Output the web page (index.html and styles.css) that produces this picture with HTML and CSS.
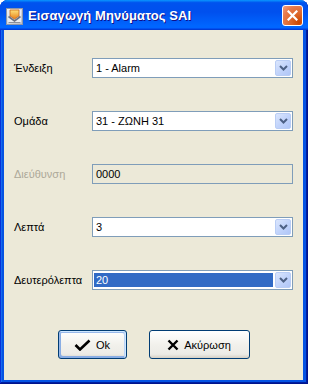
FILE: index.html
```html
<!DOCTYPE html>
<html lang="el">
<head>
<meta charset="utf-8">
<title>Εισαγωγή Μηνύματος SAI</title>
<link rel="stylesheet" href="styles.css">
</head>
<body>
<div class="window">
  <div class="titlebar">
    <svg class="app-icon" width="17" height="17" viewBox="0 0 17 17">
      <defs>
        <linearGradient id="ig" x1="0" y1="0" x2="0" y2="1">
          <stop offset="0" stop-color="#ffe27a"/>
          <stop offset="1" stop-color="#e8801a"/>
        </linearGradient>
        <linearGradient id="fr" x1="0" y1="0" x2="1" y2="1">
          <stop offset="0" stop-color="#f4f4f4"/>
          <stop offset="1" stop-color="#b9bcc4"/>
        </linearGradient>
      </defs>
      <rect x="0.5" y="0.5" width="16" height="16" fill="url(#fr)" stroke="#8e96a8"/>
      <rect x="2" y="2" width="13" height="13" fill="#e9ecf2"/>
      <path d="M4 2 H13 V8 L8.5 11 L4 8 Z" fill="url(#ig)" stroke="#c8661a" stroke-width="0.8"/>
      <path d="M2.5 8.5 L8.5 13 L14.5 8.5" fill="none" stroke="#6d7280" stroke-width="1.6"/>
      <path d="M2.5 14.5 H14.5" stroke="#8a8f9c" stroke-width="1"/>
    </svg>
    <span class="title">Εισαγωγή Μηνύματος SAI</span>
    <div class="close-btn">
      <svg width="11" height="11" viewBox="0 0 11 11">
        <path d="M1.5 1.5 L9.5 9.5 M9.5 1.5 L1.5 9.5" stroke="#ffffff" stroke-width="2.2" stroke-linecap="square"/>
      </svg>
    </div>
  </div>
  <div class="client">
    <div class="form">
      <label class="lbl">Ένδειξη</label>
      <div class="combo"><span class="value">1 - Alarm</span><span class="drop"><svg width="9" height="6" viewBox="0 0 9 6"><path d="M1 1 L4.5 4.5 L8 1" fill="none" stroke="#4d6185" stroke-width="2"/></svg></span></div>

      <label class="lbl">Ομάδα</label>
      <div class="combo"><span class="value">31 - ΖΩΝΗ 31</span><span class="drop"><svg width="9" height="6" viewBox="0 0 9 6"><path d="M1 1 L4.5 4.5 L8 1" fill="none" stroke="#4d6185" stroke-width="2"/></svg></span></div>

      <label class="lbl disabled">Διεύθυνση</label>
      <div class="textbox"><span class="value">0000</span></div>

      <label class="lbl">Λεπτά</label>
      <div class="combo"><span class="value">3</span><span class="drop"><svg width="9" height="6" viewBox="0 0 9 6"><path d="M1 1 L4.5 4.5 L8 1" fill="none" stroke="#4d6185" stroke-width="2"/></svg></span></div>

      <label class="lbl">Δευτερόλεπτα</label>
      <div class="combo"><span class="value selected">20</span><span class="drop"><svg width="9" height="6" viewBox="0 0 9 6"><path d="M1 1 L4.5 4.5 L8 1" fill="none" stroke="#4d6185" stroke-width="2"/></svg></span></div>
    </div>
    <div class="buttons">
      <div class="btn default">
        <svg width="17" height="12" viewBox="0 0 17 12"><path d="M1.5 6 L6 10.5 L15.5 1.5" fill="none" stroke="#000" stroke-width="2.6"/></svg>
        <span>Ok</span>
      </div>
      <div class="btn cancel">
        <svg width="12" height="12" viewBox="0 0 12 12"><path d="M1.5 1.5 L10.5 10.5 M10.5 1.5 L1.5 10.5" stroke="#000" stroke-width="2.4"/></svg>
        <span>Ακύρωση</span>
      </div>
    </div>
  </div>
</div>
</body>
</html>
```

FILE: styles.css
```css
html, body {
  margin: 0;
  padding: 0;
  background: #ffffff;
}

.window {
  width: 308px;
  height: 384px;
  display: flex;
  flex-direction: column;
  background: #0553e3;
  border-radius: 8px 8px 0 0;
  box-shadow: inset -1px -1px #00138c, inset 1px 0 #0831d9, inset -2px -2px #001ea0, inset 2px 0 #166aee;
  font-family: "Liberation Sans", Arial, sans-serif;
  font-size: 11px;
  color: #000;
  box-sizing: border-box;
}

.titlebar {
  height: 30px;
  display: flex;
  align-items: center;
  padding: 0 5px 0 6px;
  border-radius: 8px 8px 0 0;
  background: linear-gradient(180deg, #0997ff, #0053ee 9%, #0050ee 40%, #0066ff 86%, #0066ff 92%, #005bff 94%, #003dd7 97%, #003dd7);
  box-sizing: border-box;
}

.app-icon {
  flex: none;
  margin-top: 3px;
}

.title {
  margin-left: 5px;
  flex: 1;
  color: #ffffff;
  font-family: "Liberation Sans", Arial, sans-serif;
  font-weight: bold;
  font-size: 13px;
  text-shadow: 1px 1px #0f1089;
  letter-spacing: 0.1px;
  padding-top: 1px;
}

.close-btn {
  width: 21px;
  height: 21px;
  box-sizing: border-box;
  border: 1px solid #ffffff;
  border-radius: 3px;
  display: flex;
  align-items: center;
  justify-content: center;
  background: radial-gradient(circle at 85% 85%, #cc4600 0%, #dc6527 35%, #e67a4c 70%, #f0a081 100%);
  margin-top: 1px;
}

.client {
  flex: 1;
  margin: 0 5px 4px 4px;
  background: #ece9d8;
  padding: 28px 10px 0 10px;
  display: flex;
  flex-direction: column;
}

.form {
  display: grid;
  grid-template-columns: 78px 201px;
  grid-auto-rows: 20px;
  row-gap: 33px;
  align-items: center;
}

.lbl {
  white-space: nowrap;
}

.lbl.disabled {
  color: #aca899;
}

.combo, .textbox {
  height: 20px;
  box-sizing: border-box;
  border: 1px solid #7f9db9;
  background: #ffffff;
  display: flex;
  align-items: center;
  padding: 1px;
}

.textbox {
  background: #ece9d8;
}

.value {
  flex: 1;
  padding-left: 2px;
  margin-right: 2px;
  height: 14px;
  line-height: 14px;
}

.value.selected {
  background: #316ac5;
  color: #ffffff;
}

.drop {
  width: 16px;
  height: 16px;
  box-sizing: border-box;
  border: 1px solid #b9cdf5;
  border-radius: 2px;
  background: linear-gradient(135deg, #dbe6fd 0%, #c2d4fb 50%, #b0c6f7 100%);
  display: flex;
  align-items: center;
  justify-content: center;
}

.buttons {
  display: flex;
  justify-content: center;
  gap: 22px;
  margin-top: 40px;
}

.btn {
  height: 29px;
  box-sizing: border-box;
  border: 1px solid #003c74;
  border-radius: 3px;
  background: linear-gradient(180deg, #ffffff, #f2f1ec 50%, #ecebe6 86%, #d6d0c5);
  display: flex;
  align-items: center;
  justify-content: center;
  gap: 5px;
}

.btn.default {
  width: 69px;
  box-shadow: inset -1px 1px #cee7ff, inset 1px 2px #98b8ea, inset -2px 2px #bcd4f6, inset 1px -1px #89ade4, inset 2px -2px #89ade4;
}

.btn.cancel {
  width: 101px;
}

.btn span {
  padding-top: 1px;
}
```
